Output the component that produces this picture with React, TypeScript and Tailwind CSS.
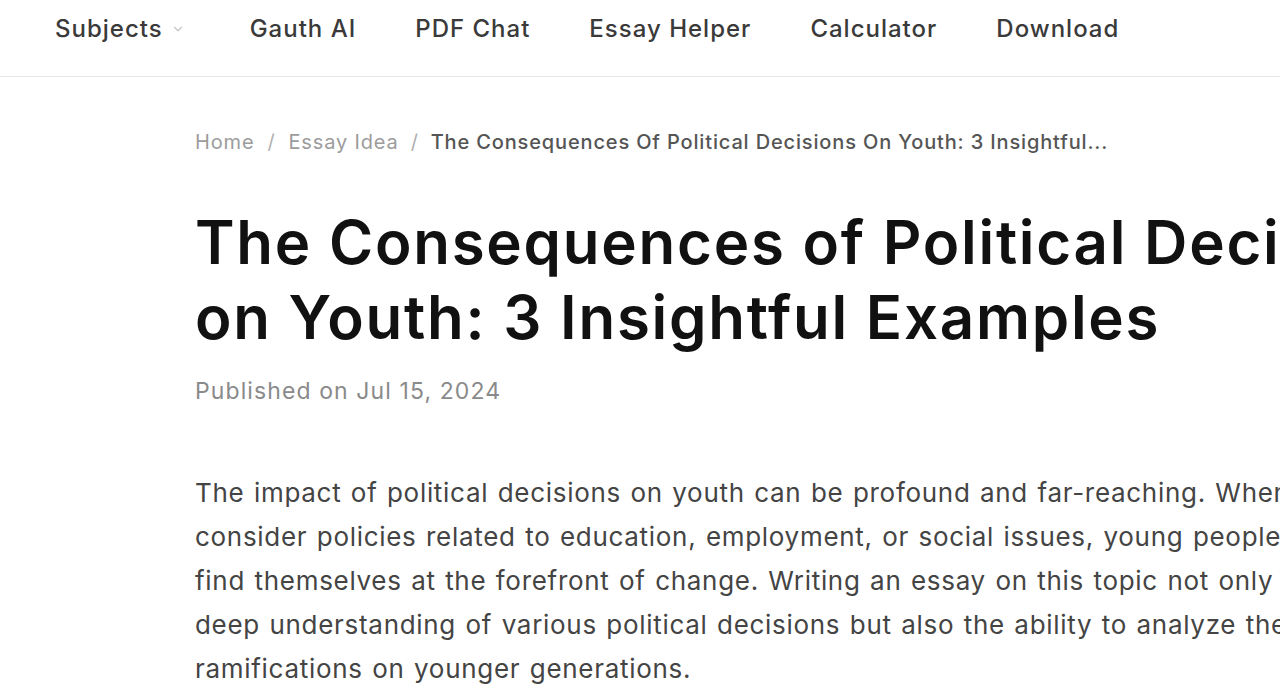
import React from 'react';

const nav = ['Gauth AI', 'PDF Chat', 'Essay Helper', 'Calculator', 'Download'];

const para = [
  'The impact of political decisions on youth can be profound and far-reaching. When we',
  'consider policies related to education, employment, or social issues, young people often',
  'find themselves at the forefront of change. Writing an essay on this topic not only requires a',
  'deep understanding of various political decisions but also the ability to analyze their',
  'ramifications on younger generations.',
];

export default function App() {
  return (
    <div className="w-full h-[700px] overflow-hidden bg-white" style={{ fontFamily: 'Inter, "Noto Sans", sans-serif' }}>
      <header className="h-[77px] border-b border-[#e8e8e8] flex items-start pt-[13px] pl-[55px]">
        <nav className="flex items-center gap-[59px] text-[24px] leading-[32px] font-medium text-[#3a3a3a] tracking-[1px]">
          <div className="flex items-center gap-[8px] mr-[6px]">
            <span>Subjects</span>
            <svg width="14" height="14" viewBox="0 0 24 24" fill="none" stroke="#c4c4c4" strokeWidth="2" strokeLinecap="round" strokeLinejoin="round">
              <path d="M6 9l6 6 6-6" />
            </svg>
          </div>
          {nav.map(n => <span key={n}>{n}</span>)}
        </nav>
      </header>

      <main className="pl-[195px]">
        <div className="pt-[50px] flex items-center text-[20px] whitespace-nowrap tracking-[0.85px]">
          <span className="text-[#9c9c9c]">Home</span>
          <span className="text-[#b0b0b0] mx-[13px]">/</span>
          <span className="text-[#9c9c9c]">Essay Idea</span>
          <span className="text-[#b0b0b0] mx-[12px]">/</span>
          <span className="text-[#555] font-medium">The Consequences Of Political Decisions On Youth: 3 Insightful...</span>
        </div>

        <h1 className="mt-[48px] text-[60px] leading-[75px] font-semibold text-[#111] whitespace-nowrap tracking-[1.75px]">
          <span className="block">The Consequences of Political Decisions</span>
          <span className="block">on Youth: 3 Insightful Examples</span>
        </h1>

        <p className="mt-[22px] text-[23px] leading-[28px] text-[#8a8a8a] tracking-[1.1px]">Published on Jul 15, 2024</p>

        <div className="mt-[66px] text-[26px] leading-[44px] text-[#444] whitespace-nowrap tracking-[0.7px] [word-spacing:1.5px]">
          {para.map(l => <span key={l} className="block">{l}</span>)}
        </div>
      </main>
    </div>
  );
}
